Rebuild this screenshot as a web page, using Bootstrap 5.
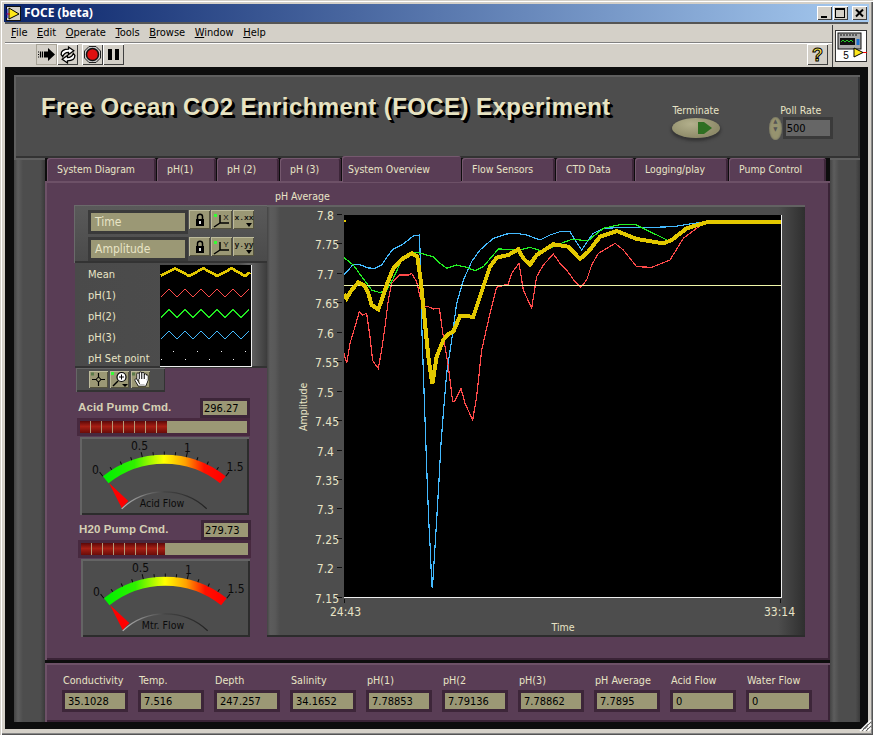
<!DOCTYPE html>
<html lang="en">
<head>
<meta charset="utf-8">
<title>FOCE (beta)</title>
<link href="https://cdn.jsdelivr.net/npm/bootstrap@5.3.0/dist/css/bootstrap.min.css" rel="stylesheet">
<style>
html,body{margin:0;background:#d4d0c8}
body{font-family:"DejaVu Sans Condensed","DejaVu Sans",sans-serif;font-size:10.5px;line-height:1.2;color:#e8e4c6}
svg{display:block}
.lvwin{width:873px;height:735px;background:#d4d0c8;padding:4px 4px 0;overflow:hidden;position:relative;box-shadow:inset 1px 1px 0 #d4d0c8,inset 2px 2px 0 #fff,inset -1px -1px 0 #555,inset -2px -2px 0 #888}
.ttl{height:18px;background:linear-gradient(90deg,#0a246a,#a6caf0);color:#fff;font-family:"Noto Sans",sans-serif;font-weight:700;font-size:12px;padding-left:2px;gap:3px}
.capbtns{gap:1px;margin-left:auto;margin-right:2px}
.capb{width:15px;height:14px;background:#d4d0c8;box-shadow:inset 1px 1px 0 #fff,inset -1px -1px 0 #404040;color:#000}
.capb+.capb+.capb{margin-left:3px}
.inner{margin-left:1px;margin-right:1px}
.chrome{height:45px;border-top:2px solid #555;background:#d4d0c8}
.menus{height:19px;gap:9.5px;padding-left:6px;color:#000;font-size:11px;border-bottom:1px solid #808080;box-shadow:0 1px 0 #fff}
.tools{height:24px;margin-top:1px;padding-left:31px}
.tb{width:21px;height:21px;background:#d4d0c8;box-shadow:inset 1px 1px 0 #fff,inset -1px -1px 0 #404040,inset 0 0 0 1px #888}
.tb.flat{box-shadow:inset 0 0 0 1px #a8a498}
.tb-help{margin-left:683px}
.viicon{width:36px;border-left:1px solid #404040;background:#d4d0c8;position:absolute;right:5px;top:25px;height:42px;padding:5px 0 0 2px}
.fp{height:662px;background:#0d0d0d;padding:8px 8px 7px 9px}
.hdr{height:83px;background:#4d4d4d;box-shadow:inset 2px 2px 0 #5f5f5f,inset -2px -2px 0 #333;padding:0 26px 0 28px;gap:0}
.bigt{font-family:"Liberation Sans",sans-serif;font-weight:700;font-size:24px;color:#e7e3c2;text-shadow:2px 2px 0 #000,3px 3px 0 #000;letter-spacing:.41px;margin:-18px 0 0 -1px;white-space:nowrap}
.term{margin-left:60px;width:50px;margin-top:9px}
.oval{width:48px;height:20px;border-radius:50%;background:radial-gradient(ellipse at 40% 30%,#b3b08c,#8e8b69 70%);box-shadow:0 2px 3px 1px #353535;margin-top:1px}
.poll{margin-left:48px;margin-top:11px}
.spin{width:13px;height:23px;border-radius:50%;background:#96936f;box-shadow:inset 0 0 2px #555;color:#555;font-size:6px;line-height:8px}
.pollbox{width:50px;height:22px;background:#666;box-shadow:inset 0 0 0 3px #3a3a3a;color:#000;font-size:11px;padding:0 0 0 4px;margin-left:1px}
.strip{width:31px;background:linear-gradient(90deg,#444,#5d5d5d 4px,#4d4d4d 9px,#4d4d4d 85%,#3a3a3a);box-shadow:inset 0 2px 0 #5f5f5f}
.strip.rgt{width:30px}
.mid{width:785px}
.lvtabs{height:23px;flex-wrap:nowrap;padding-left:2px;gap:1px;position:relative;z-index:2}
.lvtabs .nav-link{height:23px;padding:5px 0 0 10px;color:#e8e4c6;background:#593d55;font-size:10.4px;border-radius:3px 3px 0 0;box-shadow:inset 1px 1px 0 #75586e,inset -2px 0 0 #3d2639;white-space:nowrap}
.lvtabs .nav-link.active{height:26px;margin-top:-2px;padding-top:7px;padding-left:6px;background:#593d55;color:#e8e4c6;box-shadow:inset 1px 1px 0 #75586e}
.pbody{height:479px;background:#593d55;box-shadow:inset 2px 2px 0 #6d5167,inset -2px -2px 0 #3a2336;padding:8px 0 0 29px}
.lcol{width:193px;margin-top:16px;flex:none}
.rcol{width:538px;margin-left:0;flex:none}
.pcap{height:16px;padding-left:8px;margin-top:1px;margin-bottom:-1px}
.scbox{height:58px;width:194px;background:linear-gradient(180deg,#5a5a5a,#4a4a4a);box-shadow:inset 1px 1px 0 #6a6a6a,inset 0 -2px 0 #333;padding:5px 0 0 14px;gap:3px}
.frm{width:100px;height:24px;background:#9b9875;box-shadow:inset 0 0 0 3px #3a3a3a;padding:0 0 0 7px;font-size:12px;color:#e8e4c6}
.ib{width:21px;height:19px;background:#9b9875;box-shadow:inset 1px 1px 0 #bdbb9b,inset -1px -1px 0 #55533d}
.rowbt{gap:1px}
.lgbox{height:105px;width:193px;margin-left:1px;background:linear-gradient(90deg,#4a4a4a,#4d4d4d 85%,#666 90%,#3a3a3a);box-shadow:inset 0 -2px 0 #333}
.lgn{width:85px;padding:2px 0 0 13px}
.lgn div{height:21px;line-height:19px;font-size:11px;white-space:nowrap}
.swatch{width:92px;height:102px;margin-top:2px;background:#000;border-right:1px solid #eee;border-bottom:1px solid #eee}
.palet{width:89px;height:24px;margin-left:2px;background:#4d4d4d;box-shadow:inset 1px 1px 0 #666,inset -1px -2px 0 #333;padding:3px 0 0 13px;gap:2px}
.palb{width:19px;height:17px;background:#9b9875;box-shadow:inset 1px 1px 0 #bdbb9b,inset -1px -1px 0 #55533d}
.pumphd{width:176px;height:20px;margin-top:6px;padding-left:4px}
.pumphd b{font-family:"Liberation Sans",sans-serif;font-size:11.5px;color:#d5d0b4;letter-spacing:.1px}
.num{width:50px;height:20px;background:#9b9875;box-shadow:inset 0 0 0 3px #3d2639;color:#000;font-size:11px;padding:4px 0 0 4px;white-space:nowrap}
.barout{width:173px;height:18px;margin-left:3px;background:#9b9875;box-shadow:inset 0 0 0 3px #47293f;padding:3px}
.barin{height:12px;background:repeating-linear-gradient(90deg,transparent 0,transparent 10px,#b59a78 10px,#b59a78 11px),linear-gradient(180deg,#5b0808,#a71f14 45%,#6b0c08)}
.gauge{width:169px;height:78px;margin:1px 0 0 6px;background:#4d4d4d;box-shadow:inset 2px 2px 0 #646464,inset -2px -2px 0 #2c2c2c}
.gauge text{font-size:12px;fill:#0b0b0b;font-family:"DejaVu Sans Condensed","DejaVu Sans",sans-serif}
.gauge text.gname{font-size:10.5px}
.pump2{margin-left:1px;margin-top:5px}
.pump2 .pumphd{margin-top:0}
.cframe{height:432px;width:538px;background:linear-gradient(90deg,#444,#5c5c5c 3px,#595959 8px,#4d4d4d 13px,#4d4d4d 95%,#2f2f2f);box-shadow:inset 0 2px 0 #626262,inset 0 -2px 0 #2c2c2c;padding-top:10px}
.ylab{width:24px;margin-left:24px;writing-mode:vertical-rl;transform:rotate(180deg);text-align:center;height:383px;line-height:24px}
.yticks{width:29px;margin-top:-15px;margin-bottom:-14px}
.yticks div{height:29.44px;line-height:32px;text-align:right;padding-right:10px;position:relative;font-size:12px}
.yticks div::after{content:"";position:absolute;right:2px;top:14px;width:5px;height:1px;background:#111}
.xlabs{width:438px;margin-left:77px;height:24px;padding-top:7px;font-size:12px;position:relative}
.xlabs span{display:block}
.xlabs span::before{content:"";position:absolute;top:1px;width:1px;height:4px;background:#111}
.xl1{margin-left:-14px}.xl1::before{left:0}
.xl2{margin-right:-13px}.xl2::before{right:1px}
.xname{width:438px;margin-left:77px;text-align:center;margin-top:-1px}
.gapb{height:3px}
.bot{height:59px;background:#593d55;box-shadow:inset 2px 2px 0 #6d5167,inset -2px -2px 0 #3a2336;padding:11px 0 0 17px;gap:10px}
.cell{width:66px}
.cell>div:first-child{height:15px;padding:1px 0 0 1px;font-size:10.7px;white-space:nowrap}
.cell .num{width:66px;height:22px;padding:5px 0 0 6px;font-size:11px;margin-top:1px;box-shadow:inset 0 0 0 3px #3d2639}
.grip{position:absolute;right:1px;bottom:3px}
</style>
</head>
<body>
<div class="lvwin">
  <div class="ttl d-flex align-items-center">
    <svg width="15" height="15" viewBox="0 0 15 15"><rect width="15" height="15" fill="#111"/><rect x="1" y="1" width="13" height="13" fill="#d4d0c8"/><path d="M3 2 L13 8 L3 13Z" fill="#ffe81a" stroke="#000"/><path d="M0 8H4" stroke="#e00"/><path d="M1 3V12" stroke="#00c" /></svg>
    <span>FOCE (beta)</span>
    <div class="capbtns d-flex">
      <div class="capb d-flex"><svg width="15" height="14"><rect x="4" y="10" width="6" height="2" fill="#000"/></svg></div>
      <div class="capb d-flex"><svg width="15" height="14"><rect x="2.5" y="2.5" width="9" height="9" fill="none" stroke="#000"/><rect x="2" y="2" width="10" height="2" fill="#000"/></svg></div>
      <div class="capb d-flex"><svg width="15" height="14"><path d="M4 3.5L11 10.5M11 3.5L4 10.5" stroke="#000" stroke-width="2"/></svg></div>
    </div>
  </div>
  <div class="inner">
    <div class="chrome">
      <div class="menus d-flex align-items-center">
        <span><u>F</u>ile</span><span><u>E</u>dit</span><span><u>O</u>perate</span><span><u>T</u>ools</span><span><u>B</u>rowse</span><span><u>W</u>indow</span><span><u>H</u>elp</span>
      </div>
      <div class="tools d-flex">
        <div class="tb flat d-flex align-items-center justify-content-center"><svg width="17" height="13" viewBox="0 0 17 13"><path d="M6 3.5H10V0L17 6.5L10 13V9.5H6Z" fill="#000"/><path d="M0 4H1M0 6.5H1M0 9H1M2.5 3.5V9.5M4.5 3.5V9.5" stroke="#000" stroke-width="1.2"/></svg></div>
        <div class="tb d-flex align-items-center justify-content-center"><svg width="18" height="18" viewBox="0 0 17 17"><path d="M2 8C2 4 5 3 9 3V1L14 4.5L9 8V6C6 6 4.5 7 3.5 10Z" fill="#fff" stroke="#000" stroke-width="1.2"/><path d="M15 9C15 13 12 14 8 14V16L3 12.5L8 9V11C11 11 12.5 10 13.5 7Z" fill="#fff" stroke="#000" stroke-width="1.2"/></svg></div>
        <div class="tb ms-1 d-flex align-items-center justify-content-center"><svg width="17" height="17" viewBox="0 0 17 17"><path d="M5 .5H12L16.500 5V12L12 16.500H5L.5 12V5Z" fill="#c8c8c8" stroke="#222"/><circle cx="8.500" cy="8.500" r="6" fill="#e01010" stroke="#111" stroke-width="1.500"/></svg></div>
        <div class="tb d-flex align-items-center justify-content-center"><svg width="11" height="11"><rect x="0" y="0" width="4" height="11" fill="#000"/><rect x="7" y="0" width="4" height="11" fill="#000"/></svg></div>
        <div class="tb tb-help d-flex align-items-center justify-content-center"><svg width="19" height="19" viewBox="0 0 19 19"><text x="9.500" y="16" text-anchor="middle" font-family="Liberation Sans" font-weight="700" font-size="18" fill="#ffe94a" stroke="#000" stroke-width="1">?</text></svg></div>
      </div>
    </div>
    <div class="viicon">
      <svg width="32" height="32" viewBox="0 0 32 32"><rect x=".5" y=".5" width="31" height="31" fill="#fff" stroke="#333"/><rect x="3" y="3" width="23" height="16" fill="#aaa" stroke="#111"/><path d="M5 5H22" stroke="#111" stroke-dasharray="2 1" /><rect x="5" y="8" width="15" height="7" fill="#111"/><path d="M6 12L8 10L10 12L12 10L14 12L16 10L18 12" stroke="#2c2" fill="none"/><rect x="21.500" y="9" width="3" height="6" fill="#1b6fd0"/><text x="11" y="29" text-anchor="middle" font-family="Liberation Sans" font-size="10" fill="#000">5</text><path d="M19 18L28 22.500L19 27Z" fill="#ffe81a" stroke="#000"/><path d="M28 22.500H32" stroke="#e00"/></svg>
    </div>
    <div class="fp">
      <div class="hdr d-flex align-items-center">
        <h1 class="bigt">Free Ocean CO2 Enrichment (FOCE) Experiment</h1>
        <div class="term d-flex flex-column align-items-center">
          <div>Terminate</div>
          <div class="oval d-flex align-items-center justify-content-end"><svg width="22" height="14" class="me-1"><path d="M4 1H10L18 7L10 13H4Z" fill="#2f6f22"/></svg></div>
        </div>
        <div class="poll d-flex flex-column align-items-center">
          <div>Poll Rate</div>
          <div class="d-flex align-items-center">
            <div class="spin text-center">&#9650;<br>&#9660;</div>
            <div class="pollbox d-flex align-items-center">500</div>
          </div>
        </div>
      </div>
      <div class="d-flex">
        <div class="strip"></div>
        <div class="mid">
          <ul class="nav lvtabs">
            <li class="nav-item"><a class="nav-link" style="width:109px" href="#">System Diagram</a></li>
            <li class="nav-item"><a class="nav-link" style="width:59px" href="#">pH(1)</a></li>
            <li class="nav-item"><a class="nav-link" style="width:62px" href="#">pH (2)</a></li>
            <li class="nav-item"><a class="nav-link" style="width:61px" href="#">pH (3)</a></li>
            <li class="nav-item"><a class="nav-link active" style="width:119px" href="#">System Overview</a></li>
            <li class="nav-item"><a class="nav-link" style="width:93px" href="#">Flow Sensors</a></li>
            <li class="nav-item"><a class="nav-link" style="width:78px" href="#">CTD Data</a></li>
            <li class="nav-item"><a class="nav-link" style="width:93px" href="#">Logging/play</a></li>
            <li class="nav-item"><a class="nav-link" style="width:97px" href="#">Pump Control</a></li>
          </ul>
          <div class="pbody d-flex">
            <div class="lcol">
              <div class="scbox d-flex flex-column">
                <div class="d-flex rowbt">
                  <div class="frm d-flex align-items-center">Time</div>
                  <div class="ib d-flex align-items-center justify-content-center"><svg width="10" height="13" viewBox="0 0 10 13"><path d="M2.500 6V3.500C2.500 .5 7.500 .5 7.500 3.500V6" fill="none" stroke="#000" stroke-width="1.500"/><rect x="1" y="6" width="8" height="7" fill="#000"/><rect x="4" y="8" width="2" height="3" fill="#ddd"/></svg></div>
                  <div class="ib d-flex align-items-center justify-content-center"><svg width="18" height="16" viewBox="0 0 18 16"><path d="M7 3V11H16M7 11L1 15" stroke="#000" stroke-width="1.500" fill="none"/><rect x="1" y="2" width="3" height="3" fill="#3f3"/><text x="13" y="8" text-anchor="middle" font-family="Liberation Sans" font-size="8" fill="#111">X</text></svg></div>
                  <div class="ib d-flex align-items-center justify-content-center"><svg width="20" height="16" viewBox="0 0 20 16"><text x="10" y="8" text-anchor="middle" font-family="Liberation Mono" font-weight="700" font-size="8" fill="#111">x.xx</text><path d="M12 11H18L15 15Z" fill="#000"/></svg></div>
                </div>
                <div class="d-flex rowbt">
                  <div class="frm d-flex align-items-center">Amplitude</div>
                  <div class="ib d-flex align-items-center justify-content-center"><svg width="10" height="13" viewBox="0 0 10 13"><path d="M2.500 6V3.500C2.500 .5 7.500 .5 7.500 3.500V6" fill="none" stroke="#000" stroke-width="1.500"/><rect x="1" y="6" width="8" height="7" fill="#000"/><rect x="4" y="8" width="2" height="3" fill="#ddd"/></svg></div>
                  <div class="ib d-flex align-items-center justify-content-center"><svg width="18" height="16" viewBox="0 0 18 16"><path d="M7 3V11H16M7 11L1 15" stroke="#000" stroke-width="1.500" fill="none"/><rect x="1" y="2" width="3" height="3" fill="#3f3"/><text x="13" y="8" text-anchor="middle" font-family="Liberation Sans" font-size="8" fill="#111">Y</text></svg></div>
                  <div class="ib d-flex align-items-center justify-content-center"><svg width="20" height="16" viewBox="0 0 20 16"><text x="10" y="8" text-anchor="middle" font-family="Liberation Mono" font-weight="700" font-size="8" fill="#111">y.yy</text><path d="M12 11H18L15 15Z" fill="#000"/></svg></div>
                </div>
              </div>
              <div class="lgbox d-flex">
                <div class="lgn"><div>Mean</div><div>pH(1)</div><div>pH(2)</div><div>pH(3)</div><div>pH Set point</div></div>
                <div class="swatch">
                  <svg width="91" height="101" viewBox="300 230 273 303" shape-rendering="crispEdges" fill="none">
                    <path d="M303 262L345 240L388 263L430 240L472 263L515 240L555 263L570 252" stroke="#e3c800" stroke-width="8"/>
                    <path d="M303 326L327 302L351 326L375 302L399 326L423 302L447 326L471 302L495 326L519 302L543 326L567 302" stroke="#ff4a4a" stroke-width="3"/>
                    <path d="M303 388L327 364L351 388L375 364L399 388L423 364L447 388L471 364L495 388L519 364L543 388L567 364" stroke="#22e822" stroke-width="3"/>
                    <path d="M303 452L327 428L351 452L375 428L399 452L423 428L447 452L471 428L495 452L519 428L543 452L567 428" stroke="#44baff" stroke-width="3"/>
                    <path d="M303 514h3M339 490h3M375 514h3M411 490h3M447 514h3M483 490h3M519 514h3M555 490h3" stroke="#eee" stroke-width="3"/>
                  </svg>
                </div>
              </div>
              <div class="palet d-flex">
                <div class="palb d-flex align-items-center justify-content-center"><svg width="19" height="17" viewBox="0 0 19 17"><path d="M9.500 2V15M3 8.500H16" stroke="#000" stroke-width="1.200"/><circle cx="9.500" cy="8.500" r="2" fill="#9b9875" stroke="#000"/><rect x="2" y="1.500" width="3" height="3" fill="#5a7a4a"/></svg></div>
                <div class="palb d-flex align-items-center justify-content-center"><svg width="19" height="17" viewBox="0 0 19 17"><rect x="1" y="1" width="3" height="3" fill="#3f3"/><circle cx="11.500" cy="6" r="4.500" fill="#fff" stroke="#000" stroke-width="1.200"/><path d="M9 6H14M11.500 3.500V8.500" stroke="#000"/><path d="M8 10L3 15" stroke="#000" stroke-width="1.500"/><path d="M12 13H18L15 16Z" fill="#000"/></svg></div>
                <div class="palb d-flex align-items-center justify-content-center"><svg width="19" height="17" viewBox="0 0 19 17"><rect x="1" y="1.500" width="3" height="3" fill="#5a7a4a"/><path d="M5 9L8 14H14L16 9L16 5M7 8V3M9.500 8V2M12 8V2.500M14.500 8V4" stroke="#000" stroke-width="3" stroke-linecap="round" fill="none"/><path d="M5 9L8 14H14L16 9L16 5M7 8V3M9.500 8V2M12 8V2.500M14.500 8V4" stroke="#fff" stroke-width="1.500" stroke-linecap="round" fill="none"/><path d="M8 8H15V13H9Z" fill="#fff"/></svg></div>
              </div>
              <div class="pumphd d-flex justify-content-between align-items-center"><b>Acid Pump Cmd.</b><div class="num">296.27</div></div>
              <div class="barout"><div class="barin" style="width:52%"></div></div>
              <div class="gauge">
                <svg width="169" height="78" viewBox="0 0 169 78">
                  <defs>
                    <linearGradient id="gg" gradientUnits="userSpaceOnUse" x1="25" y1="0" x2="143" y2="0">
                      <stop offset="0" stop-color="#00f000"/><stop offset=".25" stop-color="#30f000"/><stop offset=".5" stop-color="#ffff00"/><stop offset=".68" stop-color="#ffa000"/><stop offset=".84" stop-color="#ff1000"/><stop offset="1" stop-color="#ff0000"/>
                    </linearGradient>
                    <linearGradient id="gd" gradientUnits="userSpaceOnUse" x1="42" y1="0" x2="127" y2="0">
                      <stop offset="0" stop-color="#b5b5b5"/><stop offset=".5" stop-color="#444"/><stop offset="1" stop-color="#222"/>
                    </linearGradient>
                    <g id="gbase">
                      <path d="M25.700 42.700A94 94 0 0 1 142.900 42.700" fill="none" stroke="url(#gg)" stroke-width="9"/>
                      <g stroke="#0b0b0b">
                        <path d="M84.300 17.700V14.500" transform="rotate(-32.200 84.300 116.200)"/><path d="M84.300 17.700V14.500" transform="rotate(-25.700 84.300 116.200)"/><path d="M84.300 17.700V14.500" transform="rotate(-19.300 84.300 116.200)"/><path d="M84.300 17.700V12.500" transform="rotate(-12.900 84.300 116.200)"/><path d="M84.300 17.700V14.500" transform="rotate(-6.400 84.300 116.200)"/><path d="M84.300 17.700V14.500"/><path d="M84.300 17.700V14.500" transform="rotate(6.400 84.300 116.200)"/><path d="M84.300 17.700V12.500" transform="rotate(12.900 84.300 116.200)"/><path d="M84.300 17.700V14.500" transform="rotate(19.300 84.300 116.200)"/><path d="M84.300 17.700V14.500" transform="rotate(25.700 84.300 116.200)"/><path d="M84.300 17.700V14.500" transform="rotate(32.200 84.300 116.200)"/><path d="M84.300 17.700V12.500" transform="rotate(38.600 84.300 116.200)"/><path d="M84.300 17.700V12.500" transform="rotate(-38.600 84.300 116.200)"/>
                      </g>
                      <path d="M41.700 71.700A62 62 0 0 1 126.700 71.700" fill="none" stroke="url(#gd)" stroke-width="1.200"/>
                      <path d="M29 46L41.700 71L48.300 64Z" fill="#ff0000"/>
                      <text x="15.500" y="37" text-anchor="middle">0</text><text x="59.500" y="13" text-anchor="middle">0.5</text><text x="107.500" y="15" text-anchor="middle">1</text><text x="155" y="34" text-anchor="middle">1.5</text>
                    </g>
                  </defs>
                  <use href="#gbase"/>
                  <text class="gname" x="82" y="70" text-anchor="middle">Acid Flow</text>
                </svg>
              </div>
              <div class="pump2">
                <div class="pumphd d-flex justify-content-between align-items-center"><b>H20 Pump Cmd.</b><div class="num">279.73</div></div>
                <div class="barout"><div class="barin" style="width:50%"></div></div>
                <div class="gauge">
                  <svg width="169" height="78" viewBox="0 0 169 78"><use href="#gbase"/><text class="gname" x="82" y="70" text-anchor="middle">Mtr. Flow</text></svg>
                </div>
              </div>
            </div>
            <div class="rcol">
              <div class="pcap">pH Average</div>
              <div class="cframe">
                <div class="d-flex">
                  <div class="ylab">Amplitude</div>
                  <div class="yticks">
                    <div>7.8</div><div>7.75</div><div>7.7</div><div>7.65</div><div>7.6</div><div>7.55</div><div>7.5</div><div>7.45</div><div>7.4</div><div>7.35</div><div>7.3</div><div>7.25</div><div>7.2</div><div>7.15</div>
                  </div>
                  <svg width="438" height="383" viewBox="192 75 1314 1149" shape-rendering="crispEdges" fill="none" class="flex-none">
                    <rect x="192" y="75" width="1314" height="1149" fill="#000"/>
                    <path d="M192 253L205 240L220 223L240 224L265 234L285 235L305 225L325 195L340 177L365 165L385 150L400 138L418 135L420 180L425 400L433 630L440 830L446 990L451 1080L455 1180L457 1195L460 1150L465 1070L470 990L477 870L483 760L490 670L500 550L515 450L530 340L550 270L575 215L600 180L640 145L680 132L710 130L740 135L780 150L810 135L840 125L870 125L885 150L905 180L925 150L940 130L970 115L1040 112L1120 112L1180 110L1240 100L1290 95L1506 95" stroke="#44baff" stroke-width="3.600"/>
                    <path d="M192 490L200 520L210 460L225 410L238 365L248 375L260 370L270 440L278 512L295 535L305 480L315 410L325 330L335 280L358 255L385 255L395 250L410 275L420 320L430 350L445 350L460 357L478 355L490 440L505 530L518 635L525 632L543 595L555 640L578 690L590 620L605 480L630 370L650 292L685 282L695 250L717 220L730 300L755 355L770 260L790 225L820 192L840 220L860 240L885 275L902 292L920 270L935 225L955 190L1005 160L1030 180L1070 230L1115 232L1170 210L1210 145L1270 100L1310 92L1506 95" stroke="#ff4a4a" stroke-width="3.600"/>
                    <path d="M192 203L220 225L245 260L275 300L300 308L320 300L340 265L365 210L390 187L410 187L460 200L480 220L500 235L530 225L560 232L585 242L610 230L655 177L690 178L710 182L750 172L790 185L830 165L875 148L925 152L945 135L970 115L1025 103L1065 103L1090 115L1165 152L1210 125L1270 97L1310 92L1506 95" stroke="#22f022" stroke-width="3.600"/>
                    <path d="M192 286H1506" stroke="#eef5a8" stroke-width="3"/>
                    <path d="M192 312L200 325L215 300L235 277L255 288L265 310L275 345L295 358L305 330L320 285L340 235L365 208L395 190L412 200L422 270L432 370L445 500L457 582L470 500L490 450L505 432L520 425L540 378L580 380L600 320L630 230L650 203L685 195L715 178L730 205L750 224L770 195L820 163L865 170L900 207L925 185L960 140L1010 123L1070 147L1150 160L1175 150L1220 115L1280 97L1340 95L1506 95" stroke="#e3c800" stroke-width="12"/>
                    <path d="M192 93h6" stroke="#e3c800" stroke-width="6"/>
                    <path d="M1504.500 75V1224M192 1222.500H1506" stroke="#eee" stroke-width="3"/>
                  </svg>
                </div>
                <div class="xlabs d-flex justify-content-between"><span class="xl1">24:43</span><span class="xl2">33:14</span></div>
                <div class="xname">Time</div>
              </div>
            </div>
          </div>
          <div class="gapb"></div>
          <div class="bot d-flex">
            <div class="cell"><div>Conductivity</div><div class="num">35.1028</div></div>
            <div class="cell"><div>Temp.</div><div class="num">7.516</div></div>
            <div class="cell"><div>Depth</div><div class="num">247.257</div></div>
            <div class="cell"><div>Salinity</div><div class="num">34.1652</div></div>
            <div class="cell"><div>pH(1)</div><div class="num">7.78853</div></div>
            <div class="cell"><div>pH(2</div><div class="num">7.79136</div></div>
            <div class="cell"><div>pH(3)</div><div class="num">7.78862</div></div>
            <div class="cell"><div>pH Average</div><div class="num">7.7895</div></div>
            <div class="cell"><div>Acid Flow</div><div class="num">0</div></div>
            <div class="cell"><div>Water Flow</div><div class="num">0</div></div>
          </div>
        </div>
        <div class="strip rgt"></div>
      </div>
    </div>
  </div>
  <svg class="grip" width="15" height="15" viewBox="0 0 15 15"><path d="M14 3L3 14M14 7L7 14M14 11L11 14" stroke="#fff" stroke-width="1.500"/><path d="M14 5L5 14M14 9L9 14" stroke="#666"/></svg>
</div>
<script src="https://cdn.jsdelivr.net/npm/bootstrap@5.3.0/dist/js/bootstrap.bundle.min.js"></script>
</body>
</html>
